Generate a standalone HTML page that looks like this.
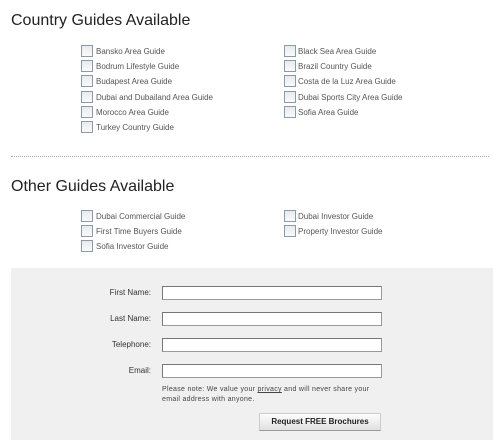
<!DOCTYPE html>
<html><head><style>
body{margin:0;width:493px;height:440px;background:#fff;font-family:"Liberation Sans",Arial,sans-serif;position:relative;overflow:hidden;color:#444}
.t{position:absolute;left:11px;font-size:16px;color:#222}
.cb{position:absolute;width:10px;height:10px;border:1px solid #8a9aab;background:linear-gradient(#e8eaec,#fafafa)}
.l{position:absolute;font-size:8px;color:#555;white-space:nowrap}
.dot{position:absolute;left:11px;top:156px;width:478px;border-top:1px dotted #aaa}
.box{position:absolute;left:11px;top:268px;width:482px;height:172px;background:#f0f0f0}
.lab{position:absolute;width:140px;left:11px;text-align:right;font-size:8px;color:#333}
.in{position:absolute;left:162px;width:218px;height:12px;background:#fff;border:1px solid #999;border-top-color:#777;border-left-color:#777}
.note{position:absolute;left:162px;top:385px;font-size:7px;color:#444;line-height:10px;letter-spacing:.3px}
.btn{position:absolute;left:259px;top:413px;width:120px;height:16px;background:linear-gradient(#fdfdfd,#e0e0e0);border:1px solid #ccc;border-bottom-color:#999;font-size:8px;font-weight:bold;text-align:center;line-height:16px;color:#222}
</style></head><body>
<div class="t" style="top:12px">Country Guides Available</div>
<div class="cb" style="left:81px;top:45px"></div><div class="l" style="left:96px;top:47px">Bansko Area Guide</div>
<div class="cb" style="left:81px;top:60px"></div><div class="l" style="left:96px;top:62px">Bodrum Lifestyle Guide</div>
<div class="cb" style="left:81px;top:75px"></div><div class="l" style="left:96px;top:77px">Budapest Area Guide</div>
<div class="cb" style="left:81px;top:91px"></div><div class="l" style="left:96px;top:93px">Dubai and Dubailand Area Guide</div>
<div class="cb" style="left:81px;top:106px"></div><div class="l" style="left:96px;top:108px">Morocco Area Guide</div>
<div class="cb" style="left:81px;top:121px"></div><div class="l" style="left:96px;top:123px">Turkey Country Guide</div>
<div class="cb" style="left:284px;top:45px"></div><div class="l" style="left:298px;top:47px">Black Sea Area Guide</div>
<div class="cb" style="left:284px;top:60px"></div><div class="l" style="left:298px;top:62px">Brazil Country Guide</div>
<div class="cb" style="left:284px;top:75px"></div><div class="l" style="left:298px;top:77px">Costa de la Luz Area Guide</div>
<div class="cb" style="left:284px;top:91px"></div><div class="l" style="left:298px;top:93px">Dubai Sports City Area Guide</div>
<div class="cb" style="left:284px;top:106px"></div><div class="l" style="left:298px;top:108px">Sofia Area Guide</div>
<div class="dot"></div>
<div class="t" style="top:178px">Other Guides Available</div>
<div class="cb" style="left:81px;top:210px"></div><div class="l" style="left:96px;top:212px">Dubai Commercial Guide</div>
<div class="cb" style="left:81px;top:225px"></div><div class="l" style="left:96px;top:227px">First Time Buyers Guide</div>
<div class="cb" style="left:81px;top:240px"></div><div class="l" style="left:96px;top:242px">Sofia Investor Guide</div>
<div class="cb" style="left:284px;top:210px"></div><div class="l" style="left:298px;top:212px">Dubai Investor Guide</div>
<div class="cb" style="left:284px;top:225px"></div><div class="l" style="left:298px;top:227px">Property Investor Guide</div>
<div class="box"></div>
<div class="lab" style="top:288px">First Name:</div><div class="in" style="top:286px"></div>
<div class="lab" style="top:314px">Last Name:</div><div class="in" style="top:312px"></div>
<div class="lab" style="top:340px">Telephone:</div><div class="in" style="top:338px"></div>
<div class="lab" style="top:366px">Email:</div><div class="in" style="top:364px"></div>
<div class="note">Please note: We value your <u>privacy</u> and will never share your<br>email address with anyone.</div>
<div class="btn">Request FREE Brochures</div>
</body></html>
